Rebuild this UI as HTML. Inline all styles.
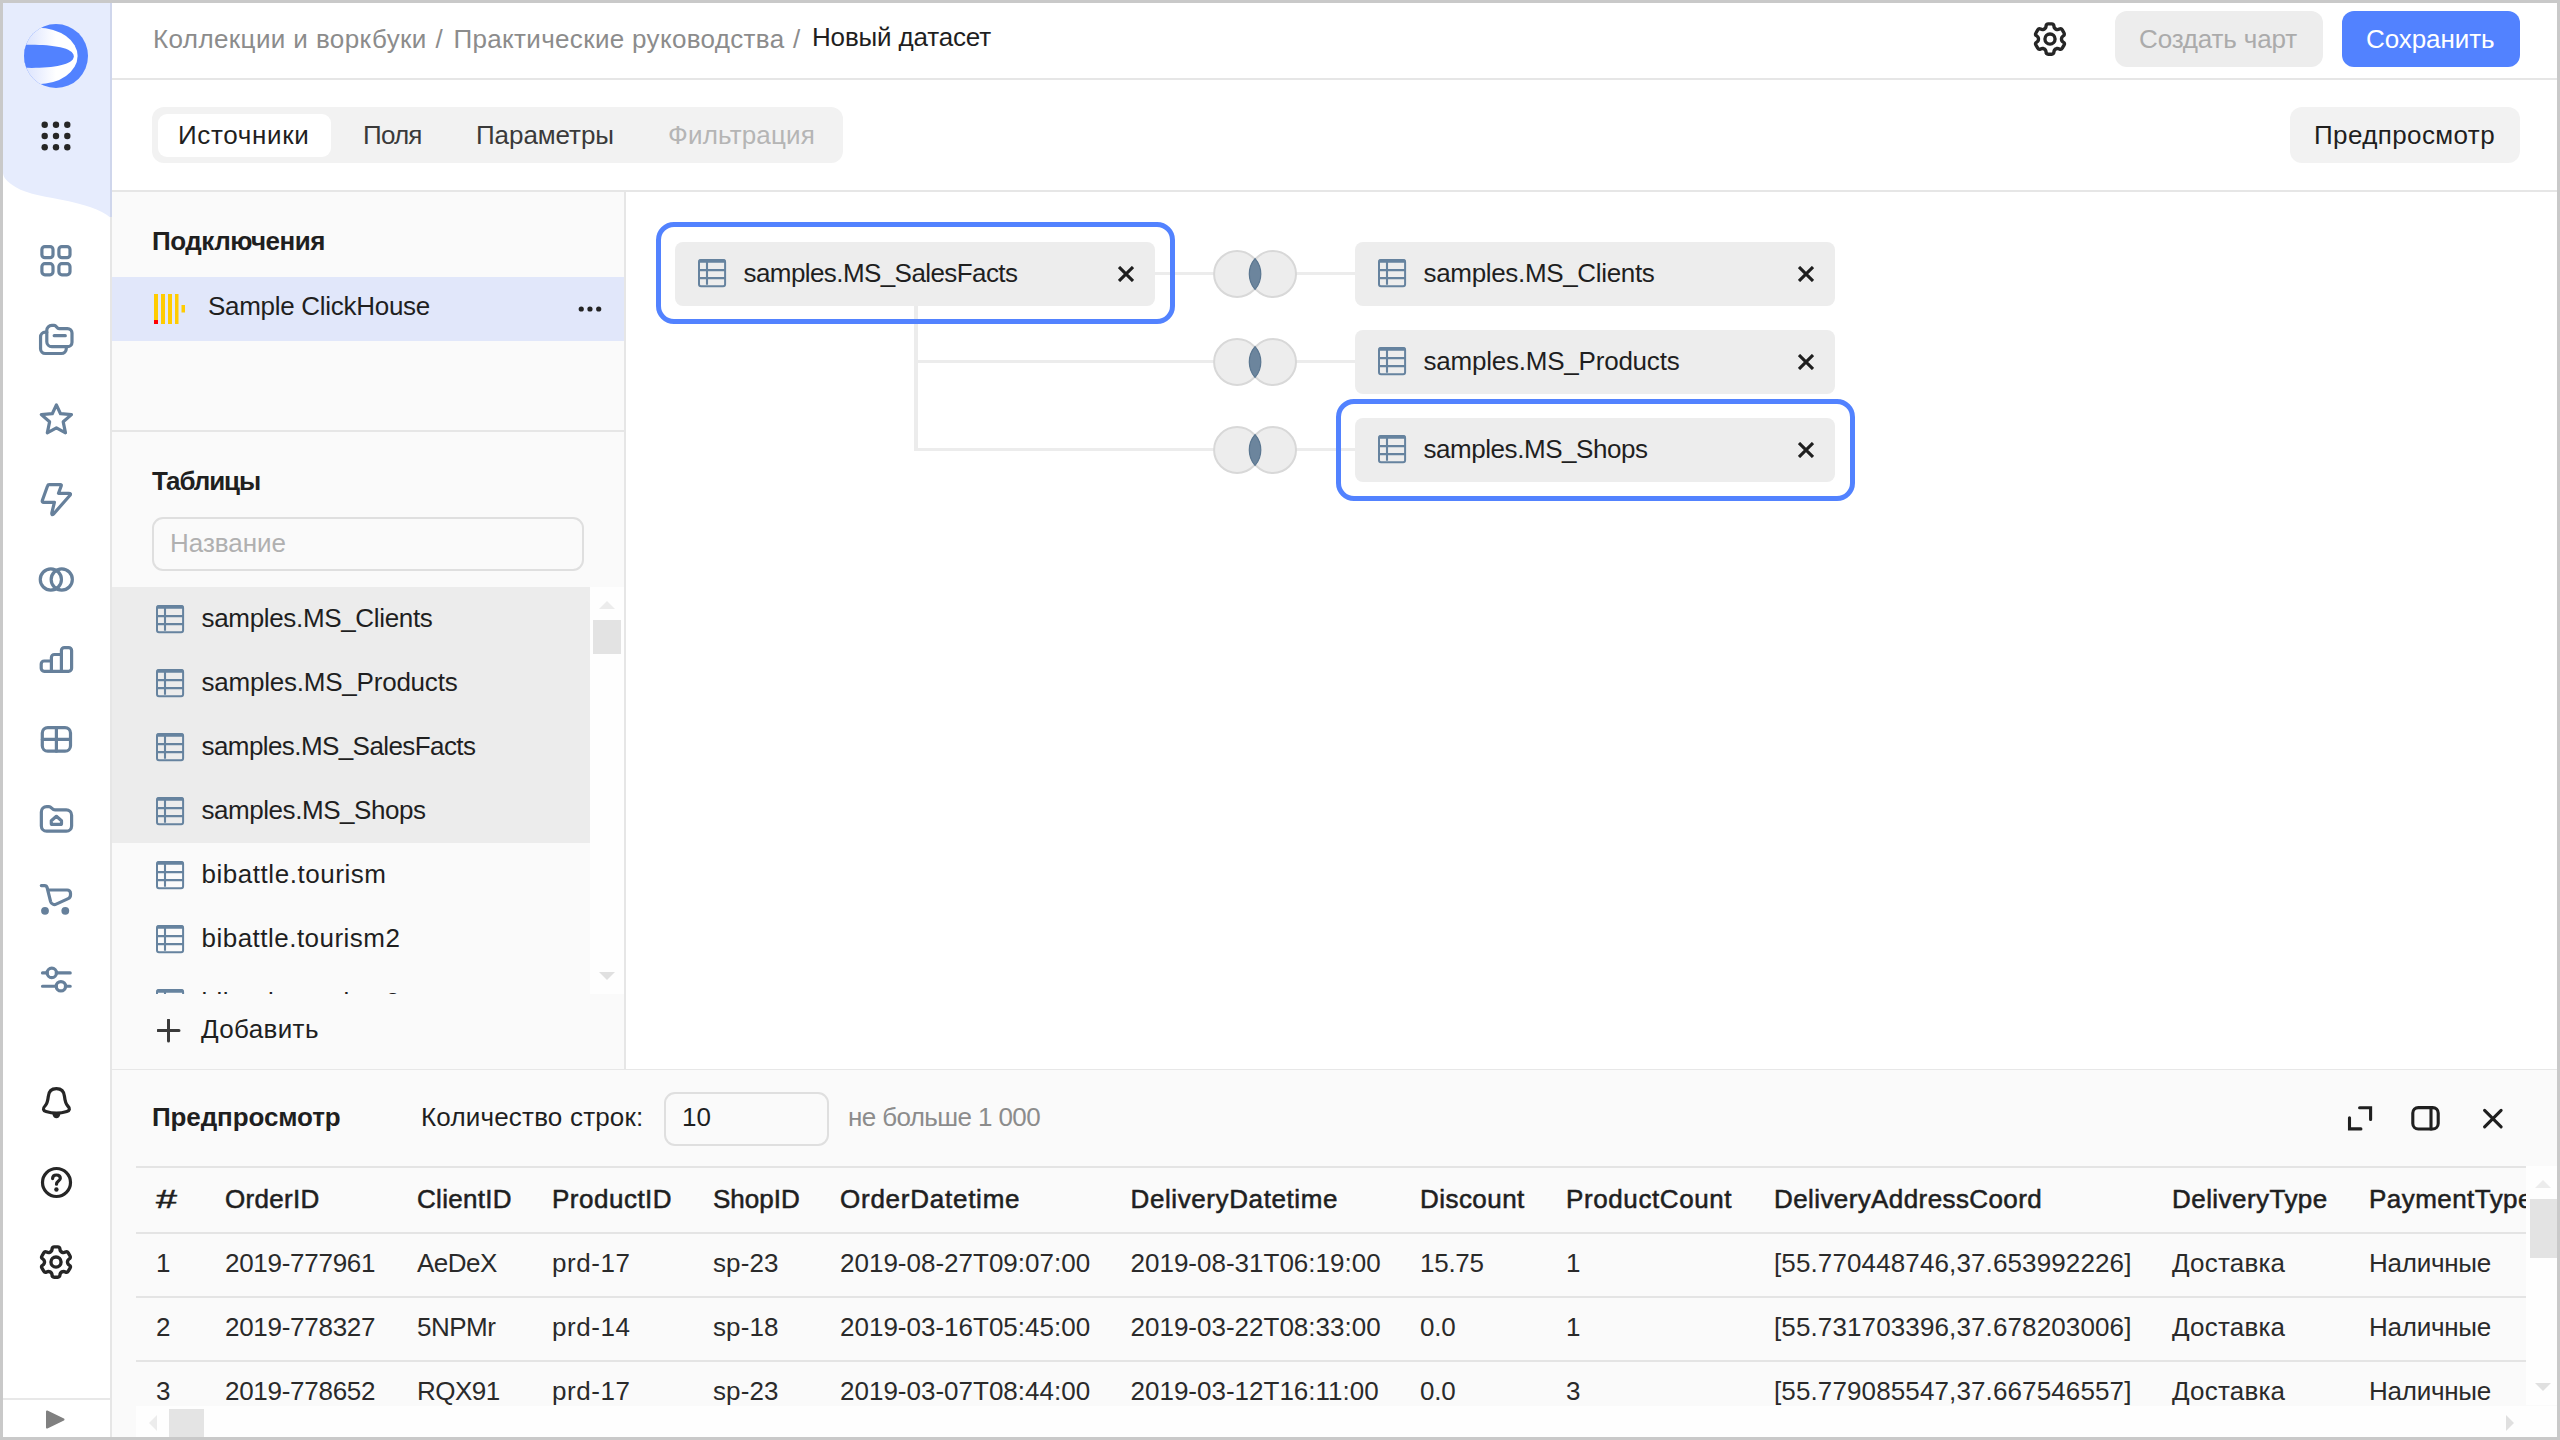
<!DOCTYPE html>
<html lang="ru">
<head>
<meta charset="utf-8">
<title>Новый датасет</title>
<style>
*{box-sizing:border-box;margin:0;padding:0}
html,body{width:2560px;height:1440px;overflow:hidden;background:#fff}
body{font-family:"Liberation Sans",sans-serif;font-size:26px;color:#1f1f1f;position:relative}
.abs{position:absolute}
.t{position:absolute;white-space:nowrap;line-height:32px;height:32px}
.gray{color:#8c8c8c}
.b{font-weight:700}
.th{color:#1f1f1f;-webkit-text-stroke:0.55px #1f1f1f}
.td{color:#2a2a2a}
#frame{position:absolute;left:0;top:0;width:2560px;height:1440px;border:3px solid #c9c9c9;z-index:50;pointer-events:none}
#side{position:absolute;left:3px;top:3px;width:109px;height:1434px;background:#fff}
#sideline{position:absolute;left:110px;top:3px;width:2px;height:1434px;background:#e6e6e6}
#sideline2{position:absolute;left:110px;top:3px;width:2px;height:214px;background:#cfd6ec}
#sidefoot{position:absolute;left:3px;top:1398.4px;width:107px;height:1.6px;background:#e8e8e8}
.ic{position:absolute;left:38px;width:36px;height:36px;color:#66809b}
.ic svg{display:block;width:36px;height:36px;overflow:visible}
.ic.dark{color:#262626}
#hline1{position:absolute;left:112px;top:78px;width:2445px;height:2px;background:#e6e6e6}
#hline2{position:absolute;left:112px;top:190px;width:2445px;height:2px;background:#e6e6e6}
.btn{position:absolute;height:56px;border-radius:12px}
#tabs{position:absolute;left:152px;top:107px;width:691px;height:56px;border-radius:12px;background:#f2f2f2}
#tabact{position:absolute;left:158px;top:114px;width:173px;height:43px;border-radius:9px;background:#fff}
#lp{position:absolute;left:112px;top:192px;width:512px;height:877px;background:#fafafa}
#lpline{position:absolute;left:624px;top:192px;width:2px;height:877px;background:#e6e6e6}
#conn{position:absolute;left:112px;top:277px;width:512px;height:64px;background:#e1e7fa}
#lpdiv{position:absolute;left:112px;top:430px;width:512px;height:2px;background:#e6e6e6}
#search{position:absolute;left:152px;top:517px;width:432px;height:54px;border:2px solid #dfdfdf;border-radius:11px;background:#fafafa}
#listsel{position:absolute;left:112px;top:587px;width:478px;height:256px;background:#ececec}
#listclip{position:absolute;left:112px;top:587px;width:478px;height:407px;overflow:hidden}
#sbtrack{position:absolute;left:590px;top:587px;width:34px;height:407px;background:#fefefe}
#sbthumb{position:absolute;left:593px;top:620px;width:28px;height:34px;background:#e3e3e3}
.tbl{position:absolute;width:28px;height:28px}
.tbl svg{display:block}
#pv{position:absolute;left:112px;top:1069px;width:2445px;height:368px;background:#fafafa}
#pvline{position:absolute;left:112px;top:1068.7px;width:2445px;height:1.3px;background:#e7e7e7}
#rows{position:absolute;left:664px;top:1091.5px;width:165px;height:54px;border:2px solid #dfdfdf;border-radius:11px;background:#fafafa}
#tclip{position:absolute;left:136px;top:1166px;width:2390px;height:239px;overflow:hidden}
.hl{position:absolute;left:0;width:2390px;height:2px;background:#e4e4e4}
#hsb{position:absolute;left:136px;top:1406px;width:2421px;height:31px;background:#fefefe}
#vsb{position:absolute;left:2526px;top:1166px;width:31px;height:239px;background:#fefefe}
.card{position:absolute;width:480px;height:64px;border-radius:8px;background:#ededed}
.hlbox{position:absolute;border:5px solid #5282ff;border-radius:18px}
.ln{position:absolute;background:#ececec}
.x{position:absolute;width:16px;height:16px}
.x svg{display:block}
</style>
</head>
<body>
<div id="side"></div>
<svg class="abs" style="left:0;top:0" width="112" height="230" viewBox="0 0 112 230"><path d="M3 3H111V218C100 209 85 204.5 60 199.5C40 195.5 22 193 11 184C5.5 179.5 3 177 3 172Z" fill="#e6ecfd"/></svg>
<div id="sideline"></div><div id="sideline2"></div>
<div id="sidefoot"></div>
<svg class="abs" style="left:24px;top:24px" width="64" height="64" viewBox="0 0 64 64"><defs><clipPath id="lc"><circle cx="32" cy="32" r="32"/></clipPath><linearGradient id="lg" x1="0" y1="0" x2="64" y2="0" gradientUnits="userSpaceOnUse"><stop offset="0" stop-color="#dbe3fd"/><stop offset="0.2" stop-color="#e8edfe"/><stop offset="0.5" stop-color="#ffffff"/></linearGradient></defs><circle cx="32" cy="32" r="32" fill="#5282ff"/><g clip-path="url(#lc)"><ellipse cx="14" cy="32" rx="39.6" ry="28.2" fill="url(#lg)"/><path d="M-4 20.9C20 19.8 49.8 22 49.8 32.3C49.8 42.6 20 44.8 -4 43.6Z" fill="#5282ff"/></g></svg>
<svg class="abs" style="left:41.3px;top:121.3px" width="30" height="30" viewBox="0 0 30 30" fill="#262626"><circle cx="3.7" cy="3.7" r="3.2"/><circle cx="15" cy="3.7" r="3.2"/><circle cx="26.3" cy="3.7" r="3.2"/><circle cx="3.7" cy="15" r="3.2"/><circle cx="15" cy="15" r="3.2"/><circle cx="26.3" cy="15" r="3.2"/><circle cx="3.7" cy="26.3" r="3.2"/><circle cx="15" cy="26.3" r="3.2"/><circle cx="26.3" cy="26.3" r="3.2"/></svg>
<div class="ic" style="top:242px"><svg viewBox="0 0 36 36"><g fill="none" stroke="currentColor" stroke-width="3.2" stroke-linecap="round" stroke-linejoin="round" stroke-width="3"><rect x="3.9" y="4.6" width="11.1" height="11.1" rx="3"/><rect x="20.9" y="4.6" width="11.1" height="11.1" rx="3"/><rect x="3.9" y="21.7" width="11.1" height="11.1" rx="3"/><rect x="20.9" y="21.7" width="11.1" height="11.1" rx="3"/></g></svg></div>
<div class="ic" style="top:322px"><svg viewBox="0 0 36 36"><g fill="none" stroke="currentColor" stroke-width="3.2" stroke-linecap="round" stroke-linejoin="round"><path d="M8.8 8.3a5 5 0 0 1 5-5H16.2C18.4 3.3 18.8 6.6 21 6.6H29.5a4.5 4.5 0 0 1 4.5 4.5V20.2a4.5 4.5 0 0 1-4.5 4.5H13.8a5 5 0 0 1-5-5Z"/><path d="M16.2 13.7H27.3"/><path d="M8.8 10.2H7.3a4.75 4.75 0 0 0-4.75 4.75V26.75a4.75 4.75 0 0 0 4.75 4.75H23.3a5 5 0 0 0 5-5V24.7"/></g></svg></div>
<div class="ic" style="top:402px"><svg viewBox="0 0 36 36"><path fill="none" stroke="currentColor" stroke-width="3.2" stroke-linecap="round" stroke-linejoin="round" d="M18.4 2.9L22.5 11.7L33.5 12.6L25.2 19.8L27.5 30.8L18.4 25.8L9.3 30.8L11.6 19.8L3.3 12.6L14.3 11.7Z"/></svg></div>
<div class="ic" style="top:482px"><svg viewBox="0 0 36 36"><path fill="none" stroke="currentColor" stroke-width="3.2" stroke-linecap="round" stroke-linejoin="round" d="M11.2 2.6H22.3Q23.7 2.6 23.2 4L20.5 11.3H30.6Q33.6 11.3 31.8 13.5L15.8 31.7Q13.3 33.9 13.9 30.6L16.4 20.3H5.8Q3.7 20.3 4.4 18.3L9.6 3.8Q10 2.6 11.2 2.6Z"/></svg></div>
<div class="ic" style="top:562px"><svg viewBox="0 0 36 36"><g fill="none" stroke="currentColor" stroke-width="3.2" stroke-linecap="round" stroke-linejoin="round"><circle cx="12.85" cy="17.5" r="10.6"/><circle cx="23.75" cy="17.5" r="10.6"/></g></svg></div>
<div class="ic" style="top:642px"><svg viewBox="0 0 36 36"><g fill="none" stroke="currentColor" stroke-width="3.2" stroke-linecap="round" stroke-linejoin="round"><path d="M13.4 19H6.2a3 3 0 0 0-3 3V26.3a3 3 0 0 0 3 3H30.6a3 3 0 0 0 3-3V8.6a3 3 0 0 0-3-3H26.4a3 3 0 0 0-3 3V29.3"/><path d="M23.4 12.5H16.4a3 3 0 0 0-3 3V29.3"/></g></svg></div>
<div class="ic" style="top:722px"><svg viewBox="0 0 36 36"><g fill="none" stroke="currentColor" stroke-width="3.2" stroke-linecap="round" stroke-linejoin="round"><rect x="4.3" y="5.6" width="28.2" height="23.6" rx="5.5"/><path d="M18.4 5.6V29.2M4.3 17.4H32.5"/></g></svg></div>
<div class="ic" style="top:802px"><svg viewBox="0 0 36 36"><g fill="none" stroke="currentColor" stroke-width="3.2" stroke-linecap="round" stroke-linejoin="round"><path d="M3.35 10a5.3 5.3 0 0 1 5.3-5.3H11C13.5 4.7 14 7.9 17 7.9H28.3a5.3 5.3 0 0 1 5.3 5.3V23.9a5.3 5.3 0 0 1-5.3 5.3H8.65a5.3 5.3 0 0 1-5.3-5.3Z"/><path d="M18.4 14.3L23.5 18.8V21.4a1 1 0 0 1-1 1H14.3a1 1 0 0 1-1-1V18.8Z"/></g></svg></div>
<div class="ic" style="top:882px"><svg viewBox="0 0 36 36"><g fill="none" stroke="currentColor" stroke-width="3.2" stroke-linecap="round" stroke-linejoin="round"><path d="M3.3 3.6H6.6a2.6 2.6 0 0 1 2.5 1.9L12.6 19.6a4 4 0 0 0 5.6 2.5L30.2 16.6a4 4 0 0 0 2.3-3.6V11.3a3.3 3.3 0 0 0-3.3-3.3H10"/></g><circle cx="7" cy="28.8" r="3.9" fill="currentColor"/><circle cx="27.3" cy="28.8" r="3.9" fill="currentColor"/></svg></div>
<div class="ic" style="top:962px"><svg viewBox="0 0 36 36"><g fill="none" stroke="currentColor" stroke-width="3.2" stroke-linecap="round" stroke-linejoin="round"><circle cx="13.8" cy="10.9" r="4.7"/><circle cx="22.9" cy="24.25" r="4.7"/><path d="M4.5 10.9H9.3M18.3 10.9H32.2M4.5 24.25H18.4M27.4 24.25H32.2"/></g></svg></div>
<div class="ic dark" style="top:1084px"><svg viewBox="0 0 36 36"><path fill="none" stroke="currentColor" stroke-width="3.2" stroke-linecap="round" stroke-linejoin="round" d="M18.4 4.7C13.5 4.7 10.8 7.5 10.3 12.5C9.8 17 9.4 19.5 7 22C4.5 24.5 5 26.5 8 27.5C11 28.5 14.5 29.2 18.4 29.2C22.3 29.2 25.8 28.5 28.8 27.5C31.8 26.5 32.3 24.5 29.8 22C27.4 19.5 27 17 26.5 12.5C26 7.5 23.3 4.7 18.4 4.7Z"/><path d="M14.4 30H22.4C22 32.8 20.4 34.3 18.4 34.3C16.4 34.3 14.8 32.8 14.4 30Z" fill="currentColor"/></svg></div>
<div class="ic dark" style="top:1164px"><svg viewBox="0 0 36 36"><g fill="none" stroke="currentColor" stroke-width="3.2" stroke-linecap="round" stroke-linejoin="round"><circle cx="18.5" cy="18.5" r="14"/><path d="M14.6 14.6C14.6 12.4 16.2 11 18.4 11C20.7 11 22.3 12.3 22.3 14.2C22.3 17.2 18.5 17 18.5 20.2"/></g><circle cx="18.4" cy="25.5" r="2.2" fill="currentColor"/></svg></div>
<div class="ic dark" style="top:1244px"><svg viewBox="0 0 16 16"><path fill="currentColor" fill-rule="evenodd" clip-rule="evenodd" d="M7.199 2H8.8a.2.2 0 0 1 .2.2c0 1.808 1.958 2.939 3.524 2.034a.199.199 0 0 1 .271.073l.802 1.388a.199.199 0 0 1-.073.272c-1.566.904-1.566 3.164 0 4.069a.199.199 0 0 1 .073.271l-.802 1.388a.199.199 0 0 1-.271.073C10.958 10.863 9 11.993 9 13.8a.2.2 0 0 1-.199.2H7.2a.199.199 0 0 1-.2-.2c0-1.808-1.958-2.938-3.524-2.034a.199.199 0 0 1-.272-.073l-.8-1.388a.199.199 0 0 1 .072-.271c1.566-.905 1.566-3.165 0-4.07a.199.199 0 0 1-.073-.271l.801-1.388a.199.199 0 0 1 .272-.073C5.042 5.138 7 4.007 7 2.199c0-.11.089-.199.199-.199ZM5.5 2.2c0-.94.76-1.7 1.699-1.7H8.8c.940 0 1.700.76 1.7 1.7a.85.85 0 0 0 1.274.735 1.699 1.699 0 0 1 2.320.622l.802 1.388c.469.813.19 1.851-.622 2.32a.85.85 0 0 0 0 1.472 1.7 1.7 0 0 1 .622 2.32l-.802 1.388a1.699 1.699 0 0 1-2.320.622.85.85 0 0 0-1.274.735c0 .939-.760 1.7-1.699 1.7H7.2a1.7 1.7 0 0 1-1.699-1.700.85.85 0 0 0-1.274-.735 1.698 1.698 0 0 1-2.32-.622l-.802-1.388a1.699 1.699 0 0 1 .622-2.320.85.85 0 0 0 0-1.471 1.699 1.699 0 0 1-.622-2.321l.801-1.388a1.699 1.699 0 0 1 2.32-.622A.85.85 0 0 0 5.5 2.2Zm4 5.8a1.5 1.5 0 1 1-3 0 1.5 1.5 0 0 1 3 0ZM11 8a3 3 0 1 1-6 0 3 3 0 0 1 6 0Z"/></svg></div>
<svg class="abs" style="left:45px;top:1409px" width="21" height="21" viewBox="0 0 21 21"><path d="M2 2.5L18.5 10.5L2 18.5Z" fill="#808080" stroke="#808080" stroke-width="2" stroke-linejoin="round"/></svg>
<div id="hline1"></div><div id="hline2"></div>
<div class="t gray" style="left:153px;top:23px;letter-spacing:0.4px;">Коллекции и воркбуки</div>
<div class="t gray" style="left:435.5px;top:23px;">/</div>
<div class="t gray" style="left:453.5px;top:23px;letter-spacing:0.33px;">Практические руководства</div>
<div class="t gray" style="left:793px;top:23px;">/</div>
<div class="t" style="left:812px;top:21px;letter-spacing:-0.16px;">Новый датасет</div>
<div class="ic dark" style="left:2032px;top:21px"><svg viewBox="0 0 16 16"><path fill="currentColor" fill-rule="evenodd" clip-rule="evenodd" d="M7.199 2H8.8a.2.2 0 0 1 .2.2c0 1.808 1.958 2.939 3.524 2.034a.199.199 0 0 1 .271.073l.802 1.388a.199.199 0 0 1-.073.272c-1.566.904-1.566 3.164 0 4.069a.199.199 0 0 1 .073.271l-.802 1.388a.199.199 0 0 1-.271.073C10.958 10.863 9 11.993 9 13.8a.2.2 0 0 1-.199.2H7.2a.199.199 0 0 1-.2-.2c0-1.808-1.958-2.938-3.524-2.034a.199.199 0 0 1-.272-.073l-.8-1.388a.199.199 0 0 1 .072-.271c1.566-.905 1.566-3.165 0-4.07a.199.199 0 0 1-.073-.271l.801-1.388a.199.199 0 0 1 .272-.073C5.042 5.138 7 4.007 7 2.199c0-.11.089-.199.199-.199ZM5.5 2.2c0-.94.76-1.7 1.699-1.7H8.8c.940 0 1.700.76 1.7 1.7a.85.85 0 0 0 1.274.735 1.699 1.699 0 0 1 2.320.622l.802 1.388c.469.813.19 1.851-.622 2.32a.85.85 0 0 0 0 1.472 1.7 1.7 0 0 1 .622 2.32l-.802 1.388a1.699 1.699 0 0 1-2.320.622.85.85 0 0 0-1.274.735c0 .939-.760 1.7-1.699 1.7H7.2a1.7 1.7 0 0 1-1.699-1.700.85.85 0 0 0-1.274-.735 1.698 1.698 0 0 1-2.32-.622l-.802-1.388a1.699 1.699 0 0 1 .622-2.320.85.85 0 0 0 0-1.471 1.699 1.699 0 0 1-.622-2.321l.801-1.388a1.699 1.699 0 0 1 2.32-.622A.85.85 0 0 0 5.5 2.2Zm4 5.8a1.5 1.5 0 1 1-3 0 1.5 1.5 0 0 1 3 0ZM11 8a3 3 0 1 1-6 0 3 3 0 0 1 6 0Z"/></svg></div>
<div class="btn" style="left:2115px;top:11px;width:208px;background:#ededed"></div>
<div class="t" style="left:2139px;top:23px;letter-spacing:-0.15px;color:#ababab">Создать чарт</div>
<div class="btn" style="left:2342px;top:11px;width:178px;background:#5282ff"></div>
<div class="t" style="left:2366px;top:23px;letter-spacing:-0.08px;color:#fff">Сохранить</div>
<div class="btn" style="left:2290px;top:107px;width:230px;background:#f2f2f2"></div>
<div class="t" style="left:2314px;top:119px;letter-spacing:0.39px;">Предпросмотр</div>
<div id="tabs"></div><div id="tabact"></div>
<div class="t" style="left:178px;top:119px;letter-spacing:0.66px;">Источники</div>
<div class="t" style="left:363px;top:119px;letter-spacing:-0.81px;color:#3a3a3a">Поля</div>
<div class="t" style="left:476px;top:119px;letter-spacing:-0.07px;color:#3a3a3a">Параметры</div>
<div class="t" style="left:668px;top:119px;letter-spacing:0.17px;color:#b5b5b5">Фильтрация</div>
<div id="lp"></div><div id="lpline"></div>
<div class="t b" style="left:152px;top:225px;letter-spacing:-0.47px;">Подключения</div>
<div id="conn"></div>
<svg class="abs" style="left:153px;top:293px" width="34" height="32" viewBox="0 0 34 32"><rect x="1" y="1" width="4" height="30" fill="#ffcc00"/><rect x="8" y="1" width="4" height="30" fill="#ffcc00"/><rect x="15" y="1" width="4" height="30" fill="#ffcc00"/><rect x="22" y="1" width="3.5" height="30" fill="#ffcc00"/><rect x="28.5" y="12" width="3.5" height="7.5" fill="#ffcc00"/><rect x="1" y="27" width="4" height="4" fill="#ff0000"/></svg>
<div class="t" style="left:208px;top:290px;letter-spacing:-0.29px;">Sample ClickHouse</div>
<svg class="abs" style="left:576px;top:304.75px" width="28" height="8" viewBox="0 0 28 8" fill="#232323"><circle cx="5.25" cy="4" r="2.6"/><circle cx="13.95" cy="4" r="2.6"/><circle cx="22.7" cy="4" r="2.6"/></svg>
<div id="lpdiv"></div>
<div class="t b" style="left:152px;top:465px;letter-spacing:-1.11px;">Таблицы</div>
<div id="search"></div>
<div class="t" style="left:170px;top:527px;letter-spacing:-0.02px;color:#b0b0b0">Название</div>
<div id="listsel"></div>
<div id="listclip">
<div class="tbl" style="left:43.7px;top:17.7px"><svg width="29" height="29" viewBox="0 0 29 29" style="color:#66839f"><rect x="1" y="1" width="26.1" height="26.2" rx="2" fill="none" stroke="currentColor" stroke-width="2"/><rect x="0.5" y="0.2" width="27.1" height="3.5" rx="1.5" fill="currentColor"/><path d="M9 3V25.8M1 11.1H27M1 19.1H27" stroke="currentColor" stroke-width="2.1" fill="none"/></svg></div>
<div class="t" style="left:89.5px;top:15px;letter-spacing:-0.33px;">samples.MS_Clients</div>
<div class="tbl" style="left:43.7px;top:81.7px"><svg width="29" height="29" viewBox="0 0 29 29" style="color:#66839f"><rect x="1" y="1" width="26.1" height="26.2" rx="2" fill="none" stroke="currentColor" stroke-width="2"/><rect x="0.5" y="0.2" width="27.1" height="3.5" rx="1.5" fill="currentColor"/><path d="M9 3V25.8M1 11.1H27M1 19.1H27" stroke="currentColor" stroke-width="2.1" fill="none"/></svg></div>
<div class="t" style="left:89.5px;top:79px;letter-spacing:-0.22px;">samples.MS_Products</div>
<div class="tbl" style="left:43.7px;top:145.7px"><svg width="29" height="29" viewBox="0 0 29 29" style="color:#66839f"><rect x="1" y="1" width="26.1" height="26.2" rx="2" fill="none" stroke="currentColor" stroke-width="2"/><rect x="0.5" y="0.2" width="27.1" height="3.5" rx="1.5" fill="currentColor"/><path d="M9 3V25.8M1 11.1H27M1 19.1H27" stroke="currentColor" stroke-width="2.1" fill="none"/></svg></div>
<div class="t" style="left:89.5px;top:143px;letter-spacing:-0.58px;">samples.MS_SalesFacts</div>
<div class="tbl" style="left:43.7px;top:209.7px"><svg width="29" height="29" viewBox="0 0 29 29" style="color:#66839f"><rect x="1" y="1" width="26.1" height="26.2" rx="2" fill="none" stroke="currentColor" stroke-width="2"/><rect x="0.5" y="0.2" width="27.1" height="3.5" rx="1.5" fill="currentColor"/><path d="M9 3V25.8M1 11.1H27M1 19.1H27" stroke="currentColor" stroke-width="2.1" fill="none"/></svg></div>
<div class="t" style="left:89.5px;top:207px;letter-spacing:-0.45px;">samples.MS_Shops</div>
<div class="tbl" style="left:43.7px;top:273.7px"><svg width="29" height="29" viewBox="0 0 29 29" style="color:#66839f"><rect x="1" y="1" width="26.1" height="26.2" rx="2" fill="none" stroke="currentColor" stroke-width="2"/><rect x="0.5" y="0.2" width="27.1" height="3.5" rx="1.5" fill="currentColor"/><path d="M9 3V25.8M1 11.1H27M1 19.1H27" stroke="currentColor" stroke-width="2.1" fill="none"/></svg></div>
<div class="t" style="left:89.5px;top:271px;letter-spacing:0.54px;">bibattle.tourism</div>
<div class="tbl" style="left:43.7px;top:337.7px"><svg width="29" height="29" viewBox="0 0 29 29" style="color:#66839f"><rect x="1" y="1" width="26.1" height="26.2" rx="2" fill="none" stroke="currentColor" stroke-width="2"/><rect x="0.5" y="0.2" width="27.1" height="3.5" rx="1.5" fill="currentColor"/><path d="M9 3V25.8M1 11.1H27M1 19.1H27" stroke="currentColor" stroke-width="2.1" fill="none"/></svg></div>
<div class="t" style="left:89.5px;top:335px;letter-spacing:0.48px;">bibattle.tourism2</div>
<div class="tbl" style="left:43.7px;top:401.7px"><svg width="29" height="29" viewBox="0 0 29 29" style="color:#66839f"><rect x="1" y="1" width="26.1" height="26.2" rx="2" fill="none" stroke="currentColor" stroke-width="2"/><rect x="0.5" y="0.2" width="27.1" height="3.5" rx="1.5" fill="currentColor"/><path d="M9 3V25.8M1 11.1H27M1 19.1H27" stroke="currentColor" stroke-width="2.1" fill="none"/></svg></div>
<div class="t" style="left:89.5px;top:399px;letter-spacing:0.48px;">bibattle.tourism3</div>
</div>
<div id="sbtrack"></div><div id="sbthumb"></div>
<svg class="abs" style="left:598px;top:600px" width="18" height="10" viewBox="0 0 18 10"><path d="M9 1L17 9H1Z" fill="#ececec"/></svg>
<svg class="abs" style="left:598px;top:971px" width="18" height="10" viewBox="0 0 18 10"><path d="M9 9L17 1H1Z" fill="#e0e0e0"/></svg>
<svg class="abs" style="left:157px;top:1019px" width="24" height="24" viewBox="0 0 24 24"><path d="M11.5 1V22M1 11.5H22" stroke="#3a3a3a" stroke-width="3" fill="none" stroke-linecap="round"/></svg>
<div class="t" style="left:201px;top:1013px;letter-spacing:0.36px;">Добавить</div>
<div class="ln" style="left:1155px;top:271.75px;width:60px;height:3.5px"></div>
<div class="ln" style="left:914px;top:305px;width:3.75px;height:146.25px"></div>
<div class="ln" style="left:914px;top:359.75px;width:300px;height:3.5px"></div>
<div class="ln" style="left:914px;top:447.75px;width:300px;height:3.5px"></div>
<div class="ln" style="left:1296px;top:271.75px;width:60px;height:3.5px"></div>
<div class="abs" style="left:1212px;top:248.5px"><svg width="86" height="50" viewBox="0 0 86 50" style="display:block"><circle cx="25.1" cy="25" r="23" fill="#ededed" stroke="#d8d8d8" stroke-width="2"/><circle cx="61" cy="25" r="23" fill="#ededed" stroke="#d8d8d8" stroke-width="2"/><path d="M43.05 9.6A23.5 23.5 0 0 1 43.05 40.4A23.5 23.5 0 0 1 43.05 9.6Z" fill="#6c859d" stroke="#5a7690" stroke-width="1.2"/></svg></div>
<div class="ln" style="left:1296px;top:359.75px;width:60px;height:3.5px"></div>
<div class="abs" style="left:1212px;top:336.5px"><svg width="86" height="50" viewBox="0 0 86 50" style="display:block"><circle cx="25.1" cy="25" r="23" fill="#ededed" stroke="#d8d8d8" stroke-width="2"/><circle cx="61" cy="25" r="23" fill="#ededed" stroke="#d8d8d8" stroke-width="2"/><path d="M43.05 9.6A23.5 23.5 0 0 1 43.05 40.4A23.5 23.5 0 0 1 43.05 9.6Z" fill="#6c859d" stroke="#5a7690" stroke-width="1.2"/></svg></div>
<div class="ln" style="left:1296px;top:447.75px;width:60px;height:3.5px"></div>
<div class="abs" style="left:1212px;top:424.5px"><svg width="86" height="50" viewBox="0 0 86 50" style="display:block"><circle cx="25.1" cy="25" r="23" fill="#ededed" stroke="#d8d8d8" stroke-width="2"/><circle cx="61" cy="25" r="23" fill="#ededed" stroke="#d8d8d8" stroke-width="2"/><path d="M43.05 9.6A23.5 23.5 0 0 1 43.05 40.4A23.5 23.5 0 0 1 43.05 9.6Z" fill="#6c859d" stroke="#5a7690" stroke-width="1.2"/></svg></div>
<div class="card" style="left:675px;top:241.6px"></div>
<div class="tbl" style="left:698px;top:259.3px"><svg width="29" height="29" viewBox="0 0 29 29" style="color:#66839f"><rect x="1" y="1" width="26.1" height="26.2" rx="2" fill="none" stroke="currentColor" stroke-width="2"/><rect x="0.5" y="0.2" width="27.1" height="3.5" rx="1.5" fill="currentColor"/><path d="M9 3V25.8M1 11.1H27M1 19.1H27" stroke="currentColor" stroke-width="2.1" fill="none"/></svg></div>
<div class="t" style="left:743.5px;top:256.6px;letter-spacing:-0.58px;">samples.MS_SalesFacts</div>
<div class="x" style="left:1118px;top:265.6px"><svg width="16" height="16" viewBox="0 0 16 16"><path d="M1 1L15 15M15 1L1 15" stroke="#1f1f1f" stroke-width="3.1" fill="none"/></svg></div>
<div class="card" style="left:1355px;top:241.6px"></div>
<div class="tbl" style="left:1378px;top:259.3px"><svg width="29" height="29" viewBox="0 0 29 29" style="color:#66839f"><rect x="1" y="1" width="26.1" height="26.2" rx="2" fill="none" stroke="currentColor" stroke-width="2"/><rect x="0.5" y="0.2" width="27.1" height="3.5" rx="1.5" fill="currentColor"/><path d="M9 3V25.8M1 11.1H27M1 19.1H27" stroke="currentColor" stroke-width="2.1" fill="none"/></svg></div>
<div class="t" style="left:1423.5px;top:256.6px;letter-spacing:-0.33px;">samples.MS_Clients</div>
<div class="x" style="left:1798px;top:265.6px"><svg width="16" height="16" viewBox="0 0 16 16"><path d="M1 1L15 15M15 1L1 15" stroke="#1f1f1f" stroke-width="3.1" fill="none"/></svg></div>
<div class="card" style="left:1355px;top:329.6px"></div>
<div class="tbl" style="left:1378px;top:347.3px"><svg width="29" height="29" viewBox="0 0 29 29" style="color:#66839f"><rect x="1" y="1" width="26.1" height="26.2" rx="2" fill="none" stroke="currentColor" stroke-width="2"/><rect x="0.5" y="0.2" width="27.1" height="3.5" rx="1.5" fill="currentColor"/><path d="M9 3V25.8M1 11.1H27M1 19.1H27" stroke="currentColor" stroke-width="2.1" fill="none"/></svg></div>
<div class="t" style="left:1423.5px;top:344.6px;letter-spacing:-0.22px;">samples.MS_Products</div>
<div class="x" style="left:1798px;top:353.6px"><svg width="16" height="16" viewBox="0 0 16 16"><path d="M1 1L15 15M15 1L1 15" stroke="#1f1f1f" stroke-width="3.1" fill="none"/></svg></div>
<div class="card" style="left:1355px;top:417.5px"></div>
<div class="tbl" style="left:1378px;top:435.2px"><svg width="29" height="29" viewBox="0 0 29 29" style="color:#66839f"><rect x="1" y="1" width="26.1" height="26.2" rx="2" fill="none" stroke="currentColor" stroke-width="2"/><rect x="0.5" y="0.2" width="27.1" height="3.5" rx="1.5" fill="currentColor"/><path d="M9 3V25.8M1 11.1H27M1 19.1H27" stroke="currentColor" stroke-width="2.1" fill="none"/></svg></div>
<div class="t" style="left:1423.5px;top:432.5px;letter-spacing:-0.45px;">samples.MS_Shops</div>
<div class="x" style="left:1798px;top:441.5px"><svg width="16" height="16" viewBox="0 0 16 16"><path d="M1 1L15 15M15 1L1 15" stroke="#1f1f1f" stroke-width="3.1" fill="none"/></svg></div>
<div class="hlbox" style="left:656px;top:222px;width:519px;height:102px"></div>
<div class="hlbox" style="left:1336px;top:399px;width:519px;height:102px"></div>
<div id="pv"></div><div id="pvline"></div>
<div class="t b" style="left:152px;top:1101px;letter-spacing:-0.11px;">Предпросмотр</div>
<div class="t" style="left:421px;top:1101px;letter-spacing:0.19px;">Количество строк:</div>
<div id="rows"></div>
<div class="t" style="left:682px;top:1101px;">10</div>
<div class="t gray" style="left:848px;top:1101px;letter-spacing:-0.61px;">не больше 1 000</div>
<svg class="abs" style="left:2344px;top:1102px" width="32" height="32" viewBox="0 0 32 32"><path fill="none" stroke="#1f1f1f" stroke-width="3.1" stroke-linecap="round" stroke-linejoin="miter" d="M15.6 5.8H26.6V17.4M5.5 15.7V26.9H16.9"/></svg>
<svg class="abs" style="left:2408px;top:1102px" width="36" height="32" viewBox="0 0 36 32"><rect x="4.8" y="5.6" width="25.4" height="21.4" rx="5.5" fill="none" stroke="#1f1f1f" stroke-width="3.1" stroke-linecap="round" stroke-linejoin="miter"/><path fill="none" stroke="#1f1f1f" stroke-width="3.1" stroke-linecap="round" stroke-linejoin="miter" d="M23 5.6V27"/></svg>
<svg class="abs" style="left:2480px;top:1106px" width="26" height="26" viewBox="0 0 26 26"><path fill="none" stroke="#1f1f1f" stroke-width="3.1" stroke-linecap="round" stroke-linejoin="miter" d="M4.6 4.3L21.1 20.8M21.1 4.3L4.6 20.8"/></svg>
<div id="tclip">
<div class="hl" style="top:0px"></div>
<div class="hl" style="top:66px"></div>
<div class="hl" style="top:130px"></div>
<div class="hl" style="top:194px"></div>
<div class="t th" style="left:20px;top:17px;transform:scaleX(1.45);transform-origin:0 50%">#</div>
<div class="t th" style="left:89px;top:17px;letter-spacing:0.3px;">OrderID</div>
<div class="t th" style="left:281px;top:17px;letter-spacing:0.3px;">ClientID</div>
<div class="t th" style="left:416px;top:17px;letter-spacing:0.5px;">ProductID</div>
<div class="t th" style="left:577px;top:17px;">ShopID</div>
<div class="t th" style="left:704px;top:17px;letter-spacing:0.75px;">OrderDatetime</div>
<div class="t th" style="left:994.5px;top:17px;letter-spacing:0.6px;">DeliveryDatetime</div>
<div class="t th" style="left:1284px;top:17px;letter-spacing:0.45px;">Discount</div>
<div class="t th" style="left:1430px;top:17px;letter-spacing:0.6px;">ProductCount</div>
<div class="t th" style="left:1638px;top:17px;letter-spacing:0.4px;">DeliveryAddressCoord</div>
<div class="t th" style="left:2036px;top:17px;letter-spacing:0.45px;">DeliveryType</div>
<div class="t th" style="left:2233px;top:17px;letter-spacing:0.45px;">PaymentType</div>
<div class="t td" style="left:20px;top:81px;">1</div>
<div class="t td" style="left:89px;top:81px;letter-spacing:-0.28px;">2019-777961</div>
<div class="t td" style="left:281px;top:81px;letter-spacing:-0.5px;">AeDeX</div>
<div class="t td" style="left:416px;top:81px;letter-spacing:0.57px;">prd-17</div>
<div class="t td" style="left:577px;top:81px;letter-spacing:0.1px;">sp-23</div>
<div class="t td" style="left:704px;top:81px;">2019-08-27T09:07:00</div>
<div class="t td" style="left:994.5px;top:81px;">2019-08-31T06:19:00</div>
<div class="t td" style="left:1284px;top:81px;letter-spacing:-0.27px;">15.75</div>
<div class="t td" style="left:1430px;top:81px;">1</div>
<div class="t td" style="left:1638px;top:81px;letter-spacing:0.12px;">[55.770448746,37.653992226]</div>
<div class="t td" style="left:2036px;top:81px;letter-spacing:0.19px;">Доставка</div>
<div class="t td" style="left:2233px;top:81px;letter-spacing:-0.25px;">Наличные</div>
<div class="t td" style="left:20px;top:145px;">2</div>
<div class="t td" style="left:89px;top:145px;letter-spacing:-0.28px;">2019-778327</div>
<div class="t td" style="left:281px;top:145px;letter-spacing:-0.5px;">5NPMr</div>
<div class="t td" style="left:416px;top:145px;letter-spacing:0.57px;">prd-14</div>
<div class="t td" style="left:577px;top:145px;letter-spacing:0.1px;">sp-18</div>
<div class="t td" style="left:704px;top:145px;">2019-03-16T05:45:00</div>
<div class="t td" style="left:994.5px;top:145px;">2019-03-22T08:33:00</div>
<div class="t td" style="left:1284px;top:145px;letter-spacing:-0.27px;">0.0</div>
<div class="t td" style="left:1430px;top:145px;">1</div>
<div class="t td" style="left:1638px;top:145px;letter-spacing:0.12px;">[55.731703396,37.678203006]</div>
<div class="t td" style="left:2036px;top:145px;letter-spacing:0.19px;">Доставка</div>
<div class="t td" style="left:2233px;top:145px;letter-spacing:-0.25px;">Наличные</div>
<div class="t td" style="left:20px;top:209px;">3</div>
<div class="t td" style="left:89px;top:209px;letter-spacing:-0.28px;">2019-778652</div>
<div class="t td" style="left:281px;top:209px;letter-spacing:-0.5px;">RQX91</div>
<div class="t td" style="left:416px;top:209px;letter-spacing:0.57px;">prd-17</div>
<div class="t td" style="left:577px;top:209px;letter-spacing:0.1px;">sp-23</div>
<div class="t td" style="left:704px;top:209px;">2019-03-07T08:44:00</div>
<div class="t td" style="left:994.5px;top:209px;">2019-03-12T16:11:00</div>
<div class="t td" style="left:1284px;top:209px;letter-spacing:-0.27px;">0.0</div>
<div class="t td" style="left:1430px;top:209px;">3</div>
<div class="t td" style="left:1638px;top:209px;letter-spacing:0.12px;">[55.779085547,37.667546557]</div>
<div class="t td" style="left:2036px;top:209px;letter-spacing:0.19px;">Доставка</div>
<div class="t td" style="left:2233px;top:209px;letter-spacing:-0.25px;">Наличные</div>
</div>
<div id="hsb"></div><div id="vsb"></div>
<div class="abs" style="left:169px;top:1409px;width:35px;height:28px;background:#e4e4e4"></div>
<div class="abs" style="left:2530px;top:1199px;width:27px;height:59px;background:#e3e3e3"></div>
<svg class="abs" style="left:148px;top:1414px" width="10" height="18" viewBox="0 0 10 18"><path d="M1 9L9 1V17Z" fill="#ececec"/></svg>
<svg class="abs" style="left:2505px;top:1414px" width="10" height="18" viewBox="0 0 10 18"><path d="M9 9L1 1V17Z" fill="#e0e0e0"/></svg>
<svg class="abs" style="left:2534px;top:1179px" width="18" height="10" viewBox="0 0 18 10"><path d="M9 1L17 9H1Z" fill="#ececec"/></svg>
<svg class="abs" style="left:2534px;top:1382px" width="18" height="10" viewBox="0 0 18 10"><path d="M9 9L17 1H1Z" fill="#e0e0e0"/></svg>
<div id="frame"></div>
</body>
</html>
